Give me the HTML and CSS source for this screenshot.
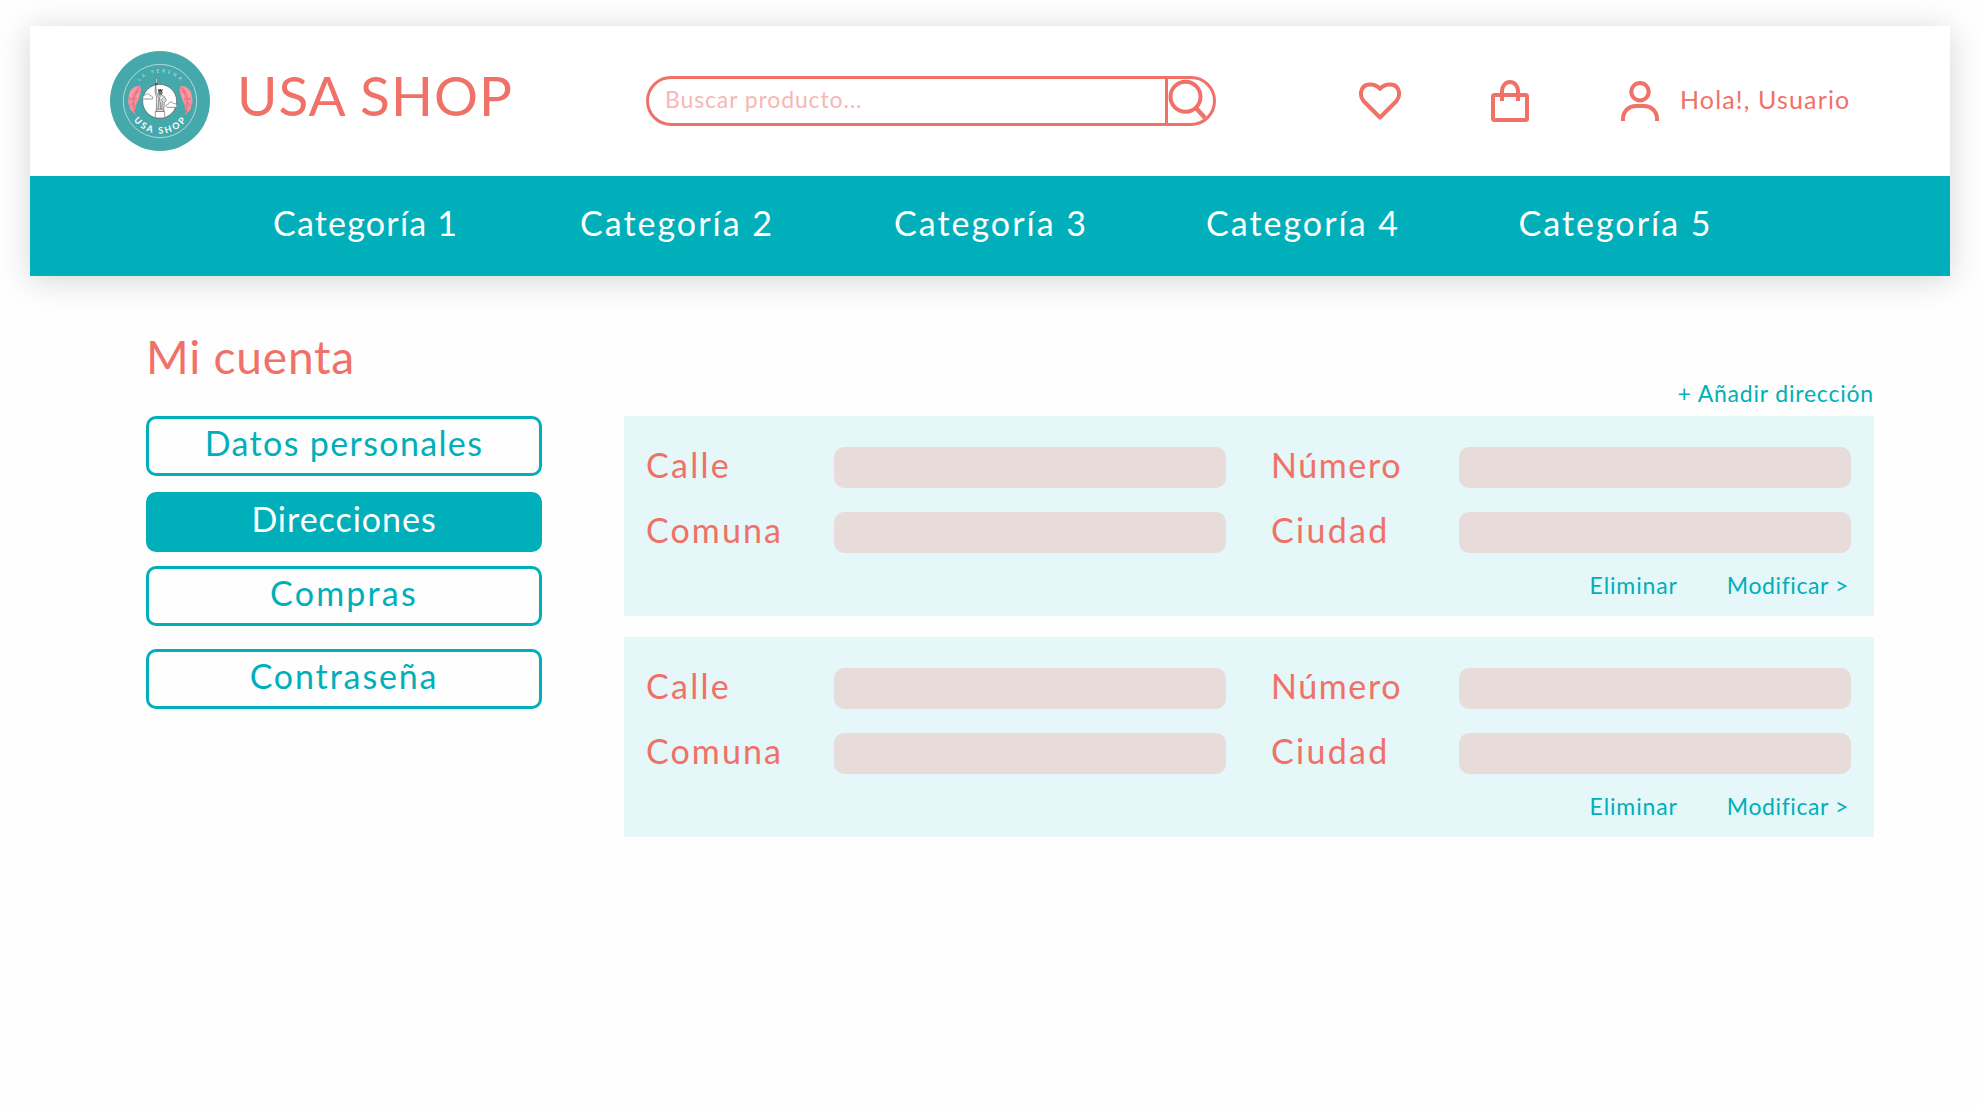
FILE: index.html
```html
<!DOCTYPE html>
<html lang="es">
<head>
<meta charset="utf-8">
<title>USA SHOP - Direcciones</title>
<link rel="stylesheet" href="styles.css">
</head>
<body>
<header class="header">
  <div class="topbar">
    <svg class="logo" viewBox="30 33 300 300" aria-hidden="true">
      <defs>
        <path id="arc-top" d="M94 183a86 86 0 0 1 172 0"/>
        <path id="arc-bottom" d="M82 183a98 98 0 0 0 196 0"/>
        <g id="feather">
          <path fill="#f3909b" d="M120 137c-14 0-26 8-31 18-4 9-2 14-4 22-2 9 0 16 5 24l-1 5c4 6 9 9 12 12l6 8-3-14c4-9 4-17 7-24 5-8 6-14 8-21 5-10 6-22 1-30z"/>
          <path fill="none" stroke="#e0566b" stroke-width="2" d="M117 142c-17 24-20 45-13 76M101 175l-12 4M101 190l-10 4M107 160l12-4M104 178l10-4M103 200l5-6"/>
          <path fill="none" stroke="#f9bfc4" stroke-width="2" d="M108 143c-10 8-15 16-16 27M117 157c-4 8-5 14-6 21"/>
        </g>
      </defs>
      <circle cx="180" cy="183" r="150" fill="#45a8ab"/>
      <circle cx="180" cy="183" r="110" fill="none" stroke="#c4e3e4" stroke-width="2.5"/>
      <use href="#feather"/>
      <use href="#feather" transform="matrix(-1 0 0 1 362 0)"/>
      <circle cx="179" cy="184" r="51" fill="#fff" stroke="#555" stroke-width="2"/>
      <g fill="#fff" stroke="#666" stroke-width="2">
        <path d="M130 177h27c4-5 0-10-6-9-1-7-10-9-14-3-4-1-6 1-7 4"/>
        <path d="M229 202h-28c-6-4-2-10 4-9 2-9 13-9 16-2 5-1 7 1 8 3"/>
        <path fill="#ddd" d="M167 120h5v12h-5zM167 132l2 26 7 8 9-2 10 8 4 10-6 5-2 27h-22l1-40-5-20z"/>
        <path d="M173 166l4 12-3 30M181 168l-5 16 14-10M187 182l-2 26M181 186v22"/>
        <circle cx="181" cy="158" r="6" fill="#777"/>
        <path stroke="#333" stroke-width="3" d="M174 152h13M175 148l3 4 3-5 3 5 4-4M165 132h8"/>
        <path d="M166 214h28v20h-28zM169 208h22v6h-22z"/>
      </g>
      <path d="M169 113l4 9h-6z" fill="#fff" stroke="#555"/>
      <text class="logo-place"><textPath href="#arc-top" startOffset="51%" text-anchor="middle">LA SERENA</textPath></text>
      <text class="logo-name"><textPath href="#arc-bottom" startOffset="51%" text-anchor="middle">USA SHOP</textPath></text>
    </svg>
    <div class="brand">USA SHOP</div>
    <div class="search">
      <span class="search-text">Buscar producto...</span>
      <span class="search-button">
        <svg viewBox="0 0 44 44" width="44" height="44"><g fill="none" stroke="#f07167" stroke-width="4"><circle cx="17.5" cy="17.7" r="15"/><path d="M27.5 28.5l10.500 11.500" stroke-width="4.500"/></g></svg>
      </span>
    </div>
    <svg class="icon-heart" viewBox="0 0 44 40" width="44" height="40"><path fill="none" stroke="#f07167" stroke-width="4" stroke-linejoin="round" d="M22 36.500L5.500 20C1 14.500 2.500 5.500 9.500 3.800C14.500 2.800 18.500 4 22 7.800C25.500 4 29.500 2.800 34.500 3.800C41.500 5.500 43 14.500 38.500 20Z"/></svg>
    <svg class="icon-bag" viewBox="0 0 38 42" width="38" height="42"><g fill="none" stroke="#f07167" stroke-width="4"><rect x="2" y="15" width="34" height="25" rx="1.500"/><path d="M11 21V11a8 9 0 0 1 16 0v10"/></g></svg>
    <svg class="icon-user" viewBox="0 0 38 40" width="38" height="40"><g fill="none" stroke="#f07167" stroke-width="4"><ellipse cx="19" cy="10.700" rx="8.700" ry="8.700"/><path d="M2 40V38C2 30 8 25 15 25H23C30 25 36 30 36 38V40"/></g></svg>
    <span class="greeting">Hola!, Usuario</span>
  </div>
  <nav class="nav">
    <a class="first">Categoría 1</a><a>Categoría 2</a><a>Categoría 3</a><a>Categoría 4</a><a>Categoría 5</a>
  </nav>
</header>
<main class="main">
  <aside class="sidebar">
    <h1 class="title">Mi cuenta</h1>
    <a class="option personal">Datos personales</a>
    <a class="option active">Direcciones</a>
    <a class="option orders">Compras</a>
    <a class="option password">Contraseña</a>
  </aside>
  <section class="addresses">
    <a class="add">+ Añadir dirección</a>
    <article class="card">
      <div class="fields">
        <label class="calle">Calle</label><span class="field"></span>
        <label class="numero">Número</label><span class="field"></span>
        <label>Comuna</label><span class="field"></span>
        <label class="ciudad">Ciudad</label><span class="field"></span>
      </div>
      <div class="actions"><a>Eliminar</a><a class="modify">Modificar &gt;</a></div>
    </article>
    <article class="card">
      <div class="fields">
        <label class="calle">Calle</label><span class="field"></span>
        <label class="numero">Número</label><span class="field"></span>
        <label>Comuna</label><span class="field"></span>
        <label class="ciudad">Ciudad</label><span class="field"></span>
      </div>
      <div class="actions"><a>Eliminar</a><a class="modify">Modificar &gt;</a></div>
    </article>
  </section>
</main>
</body>
</html>
```
FILE: styles.css
```css
* { box-sizing: border-box; }
body {
  margin: 0;
  padding: 26px 30px 0;
  min-height: 1106px;
  background: #fefefe;
  font-family: Lato, "Open Sans", sans-serif;
  color: #f07167;
  white-space: nowrap;
}
svg { display: block; flex: none; }

.header { background: #fff; box-shadow: 0 4px 30px rgba(0, 0, 0, .16); }
.topbar { display: flex; align-items: center; height: 150px; padding-left: 80px; }
.logo { width: 100px; height: 100px; }
.logo-place { fill: #c4e3e4; font-size: 14px; letter-spacing: 8px; }
.logo-name { fill: #fff; font-size: 27px; font-weight: 700; letter-spacing: 7px; }
.brand {
  width: 409px;
  margin-left: 27px;
  padding-bottom: 13px;
  font-size: 55px;
  line-height: 66px;
  letter-spacing: 1px;
}
.search {
  display: flex;
  width: 570px;
  height: 50px;
  border: 3px solid #f07167;
  border-radius: 25px;
  overflow: hidden;
}
.search-text {
  flex: 1;
  padding-left: 16px;
  font-size: 23px;
  line-height: 41px;
  letter-spacing: .87px;
  color: #f7b8b3;
}
.search-button { width: 48px; border-left: 3px solid #f07167; }
.icon-heart { margin-left: 142px; }
.icon-bag { margin-left: 89px; }
.icon-user { margin-left: 92px; }
.greeting { margin-left: 21px; padding-bottom: 4px; font-size: 25px; letter-spacing: 1.15px; }

.nav {
  display: grid;
  grid-template-columns: 307px 314px 312px 312.500px 200px;
  height: 100px;
  padding-left: 243px;
  background: #00afb9;
  color: #fff;
  font-size: 34px;
  line-height: 94px;
  letter-spacing: 2px;
}
.nav .first { letter-spacing: 1.200px; }

.main { display: flex; padding-left: 116px; }
.sidebar { width: 396px; padding-top: 51px; }
.title {
  margin: 0 0 29px;
  font-size: 46px;
  font-weight: 400;
  line-height: 60px;
  letter-spacing: .800px;
}
.option {
  display: block;
  height: 60px;
  border: 3px solid #00afb9;
  border-radius: 10px;
  font-size: 34px;
  line-height: 48px;
  text-align: center;
  color: #00afb9;
}
.personal { letter-spacing: 1.360px; }
.active { margin-top: 16px; background: #00afb9; color: #fff; letter-spacing: .970px; }
.orders { margin-top: 14px; letter-spacing: 2.200px; }
.password { margin-top: 23px; letter-spacing: 1.860px; }

.addresses { width: 1250px; margin-left: 82px; padding-top: 102px; }
.add {
  display: block;
  margin-bottom: 8px;
  font-size: 23px;
  line-height: 30px;
  letter-spacing: .800px;
  text-align: right;
  color: #00afb9;
}
.card { height: 200px; margin-bottom: 21px; padding: 31px 23px 0 22px; background: #e5f7f8; }
.fields { display: grid; grid-template-columns: 188px 392px 233px 392px; grid-auto-rows: 41px; row-gap: 24px; }
label { font-size: 34px; line-height: 36px; letter-spacing: 2.100px; }
.numero, .ciudad { padding-left: 45px; }
.calle, .ciudad { letter-spacing: 2.290px; }
.numero { letter-spacing: 1.600px; }
.field { border-radius: 10px; background: #e8dcdb; }
.actions {
  display: flex;
  justify-content: flex-end;
  gap: 49px;
  margin-top: 17px;
  padding-right: 2px;
  font-size: 23px;
  line-height: 30px;
  letter-spacing: .880px;
  color: #00afb9;
}
.modify { letter-spacing: .600px; }
```
